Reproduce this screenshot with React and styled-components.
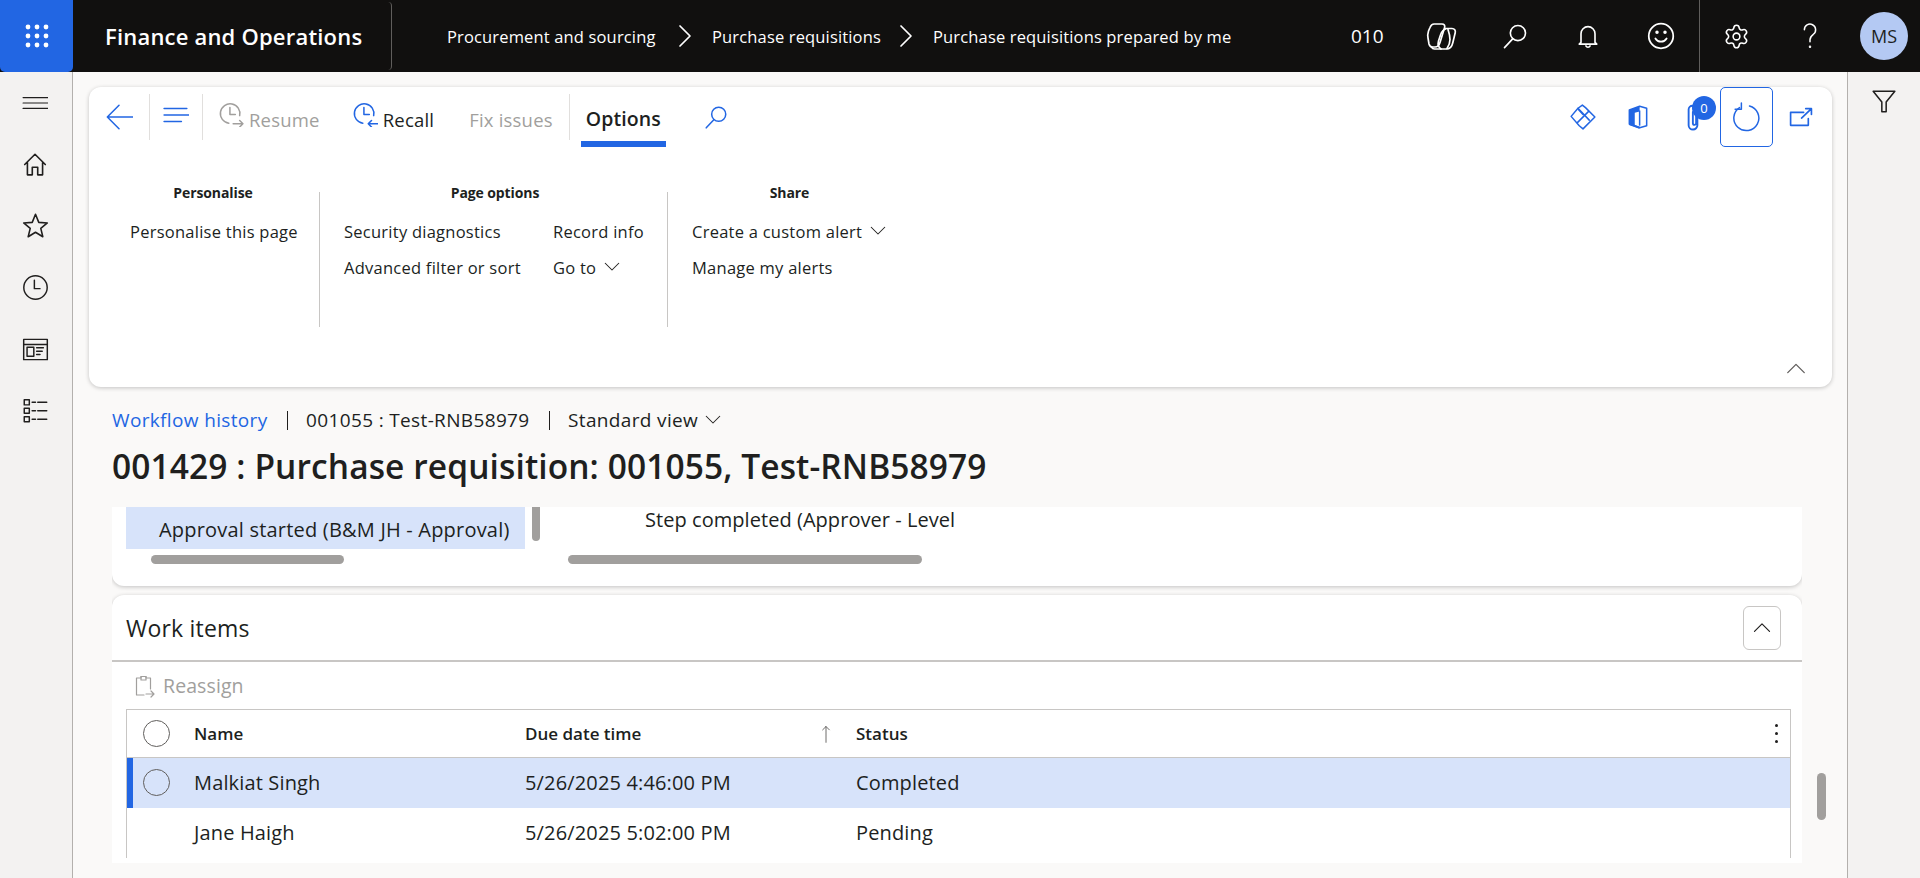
import React from "react";
import styled, { createGlobalStyle } from "styled-components";
import { Settings } from "lucide-react";

const BLUE = "#2266e3";
const INK = "#201f1e";
const MUTED = "#a19f9d";

const GlobalStyle = createGlobalStyle`
  html, body { margin: 0; padding: 0; }
  body {
    font-family: "Open Sans", "Noto Sans", sans-serif;
    color: ${INK};
    background: #faf9f8;
  }
  * { box-sizing: border-box; }
`;

const Icon = ({ size = 24, color = "currentColor", sw = 1.4, children }) => (
  <svg width={size} height={size} viewBox="0 0 24 24" fill="none" stroke={color} strokeWidth={sw} strokeLinecap="round" strokeLinejoin="round">
    {children}
  </svg>
);

const Page = styled.div`
  width: 1920px;
  height: 878px;
  overflow: hidden;
  display: flex;
  flex-direction: column;
`;

/* top bar */
const TopBar = styled.header`
  height: 72px;
  flex: none;
  background: #11100f;
  color: #fff;
  display: flex;
  align-items: center;
`;
const Waffle = styled.div`
  width: 73px;
  height: 72px;
  background: ${BLUE};
  border-radius: 0 0 5px 5px;
  display: grid;
  place-items: center;
`;
const AppTitle = styled.div`
  width: 319px;
  height: 68px;
  padding-left: 32px;
  display: flex;
  align-items: center;
  border-right: 1px solid #605e5c;
  border-radius: 0 4px 4px 0;
  font-size: 22px;
  font-weight: 600;
  letter-spacing: 0.2px;
  white-space: nowrap;
`;
const Crumbs = styled.nav`
  margin-left: 55px;
  display: flex;
  align-items: center;
  font-size: 16.5px;
  letter-spacing: 0.15px;
  white-space: nowrap;
`;
const CrumbLink = styled.span`
  width: ${(p) => p.$w}px;
`;
const CrumbSep = styled.span`
  width: ${(p) => p.$w}px;
  display: flex;
  justify-content: center;
`;
const TopRight = styled.div`
  margin-left: auto;
  display: flex;
  align-items: center;
  height: 100%;
`;
const Company = styled.span`
  width: 54px;
  font-size: 19px;
`;
const TopIcon = styled.div`
  width: 73px;
  height: 72px;
  display: grid;
  place-items: center;
`;
const TopDivider = styled.div`
  width: 1px;
  height: 72px;
  margin-left: 2px;
  background: #605e5c;
`;
const Avatar = styled.div`
  width: 48px;
  height: 48px;
  margin: 0 12px 0 14px;
  border-radius: 50%;
  background: #b4c9f3;
  color: #201f1e;
  display: grid;
  place-items: center;
  font-size: 18px;
`;

/* frame */
const Frame = styled.div`
  flex: 1;
  display: flex;
  min-height: 0;
`;
const LeftRail = styled.aside`
  width: 73px;
  flex: none;
  background: #f3f2f1;
  border-right: 1px solid #b3b0ad;
  display: flex;
  flex-direction: column;
`;
const RailItem = styled.div`
  height: 61.6px;
  display: flex;
  align-items: center;
  justify-content: center;
  padding-right: 2px;
`;
const RightRail = styled.aside`
  width: 73px;
  flex: none;
  background: #f3f2f1;
  border-left: 1px solid #b3b0ad;
  display: flex;
  justify-content: center;
  padding-top: 16px;
`;
const Main = styled.main`
  flex: 1;
  min-width: 0;
  padding: 15px 15px 15px 16px;
  display: flex;
  flex-direction: column;
  position: relative;
`;

/* action pane */
const ActionPane = styled.section`
  height: 300px;
  flex: none;
  background: #fff;
  border-radius: 12px;
  box-shadow: 0 1px 4px rgba(0, 0, 0, 0.22);
  display: flex;
  flex-direction: column;
`;
const Toolbar = styled.div`
  height: 60px;
  flex: none;
  display: flex;
  align-items: flex-start;
`;
const ToolIcon = styled.div`
  width: ${(p) => p.$w}px;
  height: 60px;
  padding-bottom: ${(p) => p.$pb || 0}px;
  flex: none;
  display: grid;
  place-items: center;
  position: relative;
  ${(p) => p.$boxed && `border: 1px solid ${BLUE}; border-radius: 5px;`}
`;
const ToolDivider = styled.div`
  width: 1px;
  height: 46px;
  margin-top: 7px;
  background: #e1dfdd;
  flex: none;
`;
const ToolButton = styled.div`
  height: 60px;
  margin-left: ${(p) => p.$ml}px;
  display: flex;
  align-items: center;
  gap: 5px;
  font-size: 18.5px;
  letter-spacing: 0.2px;
  color: ${(p) => (p.$off ? MUTED : INK)};
  white-space: nowrap;
`;
const ToolLabel = styled.span`
  padding-top: 4px;
`;
const ToolIconWrap = styled.span`
  display: flex;
  margin-top: -6px;
`;
const OptionsTab = styled.div`
  width: 85px;
  height: 60px;
  margin-left: 11px;
  text-align: center;
  line-height: 64px;
  font-size: 19.5px;
  font-weight: 600;
  letter-spacing: 0.1px;
  white-space: nowrap;
  border-bottom: 6px solid ${BLUE};
`;
const ToolRight = styled.div`
  margin-left: auto;
  margin-right: 5px;
  display: flex;
`;
const Badge = styled.span`
  position: absolute;
  left: 27px;
  top: 9px;
  width: 24px;
  height: 24px;
  border-radius: 50%;
  background: ${BLUE};
  color: #fff;
  font-size: 13px;
  line-height: 24px;
  text-align: center;
`;

const Ribbon = styled.div`
  margin-top: 45px;
  display: flex;
`;
const RibbonGroup = styled.div`
  width: ${(p) => p.$w}px;
  height: 135px;
  padding-left: ${(p) => p.$pl}px;
  padding-right: ${(p) => p.$pr || 0}px;
  border-right: ${(p) => (p.$last ? "none" : "1px solid #c8c6c4")};
  flex: none;
`;
const GroupHead = styled.div`
  height: 2px;
  text-align: center;
  font-size: 14px;
  font-weight: 700;
  letter-spacing: -0.1px;
  line-height: 2px;
  width: ${(p) => p.$w}px;
`;
const GroupGrid = styled.div`
  margin-top: 19px;
  display: grid;
  grid-template-columns: ${(p) => p.$cols};
  grid-auto-rows: 36px;
  align-items: center;
  font-size: 16.5px;
  letter-spacing: 0.25px;
  white-space: nowrap;
`;
const RibbonItem = styled.div`
  display: flex;
  align-items: center;
  gap: ${(p) => p.$gap || 0}px;
`;
const PaneFoot = styled.div`
  margin-top: auto;
  padding: 0 25px 7px 0;
  display: flex;
  justify-content: flex-end;
`;

/* page header */
const PageHead = styled.div`
  padding-left: 23px;
  height: 120px;
  flex: none;
  white-space: nowrap;
`;
const ViewLine = styled.div`
  padding-top: 15px;
  display: flex;
  align-items: center;
  height: 50px;
  font-size: 19px;
  letter-spacing: 0.35px;
`;
const ViewLink = styled.span`
  color: ${BLUE};
`;
const Pipe = styled.span`
  width: 1.5px;
  height: 19px;
  background: ${INK};
  margin: 2px 18px 0 19px;
`;
const ViewChevronGap = styled.span`
  width: 6px;
`;
const PageTitle = styled.h1`
  margin: 7px 0 0;
  font-size: 33.5px;
  line-height: 44px;
  font-weight: 600;
  letter-spacing: 0.1px;
`;

/* scrolling content */
const Scroller = styled.div`
  flex: 1;
  min-height: 0;
  overflow: hidden;
  margin-left: 23px;
  margin-right: 30px;
  display: flex;
  flex-direction: column;
  gap: 9px;
`;
const VScrollThumb = styled.div`
  position: absolute;
  left: 1744px;
  top: 701px;
  width: 9px;
  height: 47px;
  border-radius: 5px;
  background: #a19f9d;
`;
const TreeCard = styled.section`
  height: 79px;
  flex: none;
  background: #fff;
  border-radius: 0 0 12px 12px;
  box-shadow: 0 1px 4px rgba(0, 0, 0, 0.22);
  display: flex;
`;
const TreeCol = styled.div`
  width: ${(p) => p.$w}px;
  margin-left: ${(p) => p.$ml}px;
  flex: none;
`;
const TreeRow = styled.div`
  display: flex;
  height: 42px;
`;
const ActiveNode = styled.div`
  width: 399px;
  height: 42px;
  background: #d7e3fa;
  padding: 11px 0 0 33px;
  font-size: 20px;
  line-height: 24px;
  letter-spacing: 0.2px;
  white-space: nowrap;
`;
const TreeVThumb = styled.div`
  width: 8px;
  height: 34px;
  margin-left: 7px;
  border-radius: 0 0 4px 4px;
  background: #a19f9d;
`;
const StepNode = styled.div`
  padding: 0 0 0 77px;
  font-size: 20px;
  letter-spacing: 0.05px;
  white-space: nowrap;
  line-height: 26px;
`;
const HBar = styled.div`
  width: ${(p) => p.$w}px;
  height: 9px;
  margin: 6px 0 0 ${(p) => p.$ml}px;
  border-radius: 5px;
  background: #a19f9d;
`;
const WorkCard = styled.section`
  flex: 1;
  min-height: 320px;
  background: #fff;
  border-radius: 12px 12px 0 0;
  box-shadow: 0 1px 4px rgba(0, 0, 0, 0.22);
`;
const CardHead = styled.div`
  height: 67px;
  display: flex;
  align-items: center;
  justify-content: space-between;
  padding: 0 21px 0 14px;
  border-bottom: 2px solid #c8c6c4;
`;
const CardTitle = styled.h2`
  margin: 0;
  font-size: 23px;
  font-weight: 500;
  letter-spacing: 0.2px;
`;
const CollapseBtn = styled.div`
  width: 38px;
  height: 44px;
  border: 1px solid #c8c6c4;
  border-radius: 6px;
  display: grid;
  place-items: center;
`;
const SubBar = styled.div`
  height: 47px;
  padding-left: 21px;
  display: flex;
  align-items: center;
  gap: 6px;
  font-size: 19.5px;
  letter-spacing: 0.1px;
  color: ${MUTED};
`;
const Grid = styled.div`
  margin: 0 11px 0 14px;
  border: 1px solid #c8c6c4;
  border-bottom: none;
`;
const GridRow = styled.div`
  display: grid;
  grid-template-columns: 67px 331px 331px 1fr;
  align-items: center;
  height: ${(p) => p.$h}px;
  padding-bottom: ${(p) => (p.$head ? 0 : 2)}px;
  background: ${(p) => (p.$selected ? "#d7e3fa" : "#fff")};
  border-bottom: ${(p) => (p.$head ? "1px solid #c8c6c4" : "none")};
  position: relative;
  font-size: ${(p) => (p.$head ? "17px" : "20px")};
  font-weight: ${(p) => (p.$head ? 600 : 400)};
  letter-spacing: ${(p) => (p.$head ? "0" : "0.15px")};
  white-space: nowrap;
`;
const RowAccent = styled.span`
  position: absolute;
  left: 0;
  top: 0;
  bottom: 0;
  width: 6px;
  background: ${BLUE};
`;
const Radio = styled.span`
  width: 27px;
  height: 27px;
  margin-left: 16px;
  border-radius: 50%;
  border: 1px solid #605e5c;
  display: block;
`;
const HeadCell = styled.div`
  display: flex;
  align-items: center;
  justify-content: space-between;
  padding-right: 20px;
`;
const StatusCell = styled.div`
  display: flex;
  align-items: center;
  justify-content: space-between;
  padding-right: 12px;
`;
const DotsBtn = styled.div`
  display: flex;
  flex-direction: column;
  gap: 5px;
`;
const Dot = styled.span`
  width: 3px;
  height: 3px;
  border-radius: 50%;
  background: ${INK};
`;

/* icons */
const WaffleIcon = () => (
  <svg width="24" height="24" viewBox="0 0 24 24" fill="#fff">
    {[3, 12, 21].flatMap((y) =>
      [3, 12, 21].map((x) => <circle key={`${x}-${y}`} cx={x} cy={y} r="2.4" />)
    )}
  </svg>
);
const Chevron = ({ size = 24, dir = "right", color = "#fff" }) => {
  const d = {
    right: "M7 2l10 10-10 10",
    down: "M3 7l9 9 9-9",
    up: "M3 16l9-9 9 9",
  }[dir];
  return (
    <Icon size={size} color={color} sw={dir === "right" ? 1.7 : 1.4}>
      <path d={d} />
    </Icon>
  );
};
const CopilotIcon = () => (
  <svg width="44" height="44" viewBox="0 0 44 44" fill="none" stroke="#fff" strokeWidth="1.7" strokeLinejoin="round" strokeLinecap="round">
    <path d="M14 10h8c2.200 0 3.200 1.500 2.600 3.500L20 28.500c-.8 2.800-2.200 4.500-5 4.500h-2.500c-2.200 0-3-1-3.500-3L8 24c-.5-2.500-.3-4.500.5-7l1.500-3.500C11 11 12 10 14 10z" />
    <path d="M25 14.500h7c2.500 0 3.800 1.800 3.200 4.200l-2.400 10c-.9 4-2.800 6.300-6.300 6.300H14.500c-1.500 0-2.500-1-3-2" />
    <path d="M25.500 15c-2.500.7-4 3-5 6l-2 6c-.8 3-.5 6 2.500 8" />
    <path d="M28 15.500c1.200 3.500 2 7 2 10s-1 6-3 9" />
  </svg>
);
const SearchIcon = ({ size = 28, color = "#fff", sw = 1.4 }) => (
  <Icon size={size} color={color} sw={sw}>
    <circle cx="14.5" cy="9.5" r="6.5" />
    <path d="M10 14.5L3 22" />
  </Icon>
);
const BellIcon = () => (
  <Icon size={28}>
    <path d="M6 17.5V10a6 6 0 0 1 12 0v7.5l1.5 1.5h-15z" />
    <path d="M10.2 20.5a2 2 0 0 0 3.6 0" />
  </Icon>
);
const SmileIcon = () => (
  <Icon size={30}>
    <circle cx="12" cy="12" r="9.8" />
    <path d="M7.5 14a5.2 5.2 0 0 0 9 0" />
    <circle cx="8.8" cy="9" r=".7" fill="#fff" />
    <circle cx="15.2" cy="9" r=".7" fill="#fff" />
  </Icon>
);
const HelpIcon = () => (
  <Icon size={30} sw={1.2}>
    <path d="M7.5 7a4.500 4.500 0 1 1 7.200 3.600c-1.600 1.200-2.700 2-2.700 4.400v1.500" />
    <circle cx="12" cy="20.500" r=".4" fill="#fff" />
  </Icon>
);
const BackIcon = () => (
  <Icon size={28} color={BLUE} sw={1.3}>
    <path d="M25 12H2M12 2L2 12l10 10" />
  </Icon>
);
const LinesIcon = () => (
  <Icon size={26} color={BLUE} sw={1.4}>
    <path d="M1 6h21M1 12h24M1 18h16" />
  </Icon>
);
const ClockArrow = ({ color, back }) => (
  <Icon size={26} color={color} sw={1.4}>
    <path d="M10 20.5a9 9 0 1 1 10-7" />
    <path d="M11 6v6.5h5" />
    {back ? <path d="M24 21h-9m3-3l-3 3 3 3" /> : <path d="M14 21h9m-3-3l3 3-3 3" />}
  </Icon>
);
const DiamondIcon = () => (
  <Icon size={30} color={BLUE} sw={1.2}>
    <path d="M8 5L2.500 11.500 9 19l3 2.500 9.500-9.500L14 4.500 11.500 2.500z" />
    <path d="M8 5l9 9.500M16.500 7.500l-9 9M12 10l-3.500-3.800" />
  </Icon>
);
const OfficeIcon = () => (
  <svg width="26" height="28" viewBox="0 0 24 24" fill="none">
    <path d="M13.500 2L4 5.500v13l9.500 3.500 6.500-2V4z" fill="#fff" stroke={BLUE} strokeWidth="1.4" strokeLinejoin="round" />
    <path d="M13.500 2L4 5.500v13l5 1.500V8l4.500-1z" fill={BLUE} />
    <path d="M13.500 6v14" stroke={BLUE} strokeWidth="1.4" />
    <path d="M4 18.500l9.500 3.500" stroke={BLUE} strokeWidth="2" />
  </svg>
);
const ClipIcon = () => (
  <Icon size={30} color={BLUE} sw={1.5}>
    <path d="M15.500 4v14.500a3.500 3.500 0 0 1-7 0V6a3 3 0 0 1 6 0v11a1.300 1.300 0 0 1-2.600 0V8" />
  </Icon>
);
const RefreshIcon = () => (
  <Icon size={30} color={BLUE} sw={1.2}>
    <path d="M14 3.200A10 10 0 1 1 6 4.500" />
    <path d="M7.500 .8v5h-5" />
  </Icon>
);
const OpenIcon = () => (
  <Icon size={25} color={BLUE} sw={1.6}>
    <path d="M15 7H2.500v12.500h17V13" />
    <path d="M13 12.500L22 4M17 3.500h5.500V9" />
  </Icon>
);
const MenuIcon = () => (
  <Icon size={26} color={INK} sw={1.1}>
    <path d="M1 7h24M1 12h24M1 17h24" />
  </Icon>
);
const HomeIcon = () => (
  <Icon size={26} color={INK} sw={1.5}>
    <path d="M2.500 12.500L12 3l9.500 9.500M5 10.500V22h4.500v-7h5v7H19V10.500" />
  </Icon>
);
const StarIcon = () => (
  <Icon size={27} color={INK} sw={1.4}>
    <path d="M12 2l2.900 7.200 7.600.5-5.800 4.900 1.800 7.400-6.500-4-6.500 4 1.800-7.400L1.500 9.700l7.600-.5z" />
  </Icon>
);
const RecentIcon = () => (
  <Icon size={27} color={INK} sw={1.3}>
    <circle cx="12" cy="12" r="10.400" />
    <path d="M11 5.500V13h5" />
  </Icon>
);
const WorkspaceIcon = () => (
  <Icon size={27} color={INK} sw={1.3}>
    <rect x="1.500" y="3" width="21" height="18" />
    <path d="M1.500 7.500h21" />
    <rect x="4.500" y="10" width="6" height="8" />
    <path d="M13 10.500h6M13 13.500h5M13 16.500h3" />
  </Icon>
);
const ListIcon = () => (
  <Icon size={27} color={INK} sw={1.3}>
    <rect x="2" y="2.500" width="4.500" height="4.500" />
    <rect x="2" y="10" width="4.500" height="4.500" />
    <rect x="2" y="17.500" width="4.500" height="4.500" />
    <path d="M9 4.700h3M14 4.700h8M9 12.200h3M14 12.200h8M9 19.700h3M14 19.700h8" />
  </Icon>
);
const FilterIcon = () => (
  <Icon size={26} color={INK} sw={1.4}>
    <path d="M2 3h20l-8 10v9h-4v-9z" />
  </Icon>
);
const ReassignIcon = () => (
  <Icon size={24} color={MUTED} sw={1.2}>
    <path d="M11 21H3.500V4H8V2.500h5V4h4.500v11" />
    <path d="M8 2.500h5V6H8z" />
    <path d="M13 20h8m-3-3l3 3-3 3" />
  </Icon>
);
const SortIcon = () => (
  <Icon size={20} color="#605e5c" sw={1.1}>
    <path d="M12 22V3M8 7l4-4 4 4" />
  </Icon>
);

const railIcons = [MenuIcon, HomeIcon, StarIcon, RecentIcon, WorkspaceIcon, ListIcon];

export default function App() {
  return (
    <Page>
      <GlobalStyle />
      <TopBar>
        <Waffle>
          <WaffleIcon />
        </Waffle>
        <AppTitle>Finance and Operations</AppTitle>
        <Crumbs>
          <CrumbLink $w={210}>Procurement and sourcing</CrumbLink>
          <CrumbSep $w={55}><Chevron /></CrumbSep>
          <CrumbLink $w={167}>Purchase requisitions</CrumbLink>
          <CrumbSep $w={54}><Chevron /></CrumbSep>
          <CrumbLink $w={299}>Purchase requisitions prepared by me</CrumbLink>
        </Crumbs>
        <TopRight>
          <Company>010</Company>
          <TopIcon><CopilotIcon /></TopIcon>
          <TopIcon><SearchIcon /></TopIcon>
          <TopIcon><BellIcon /></TopIcon>
          <TopIcon><SmileIcon /></TopIcon>
          <TopDivider />
          <TopIcon><Settings size={27} strokeWidth={1.4} color="#fff" /></TopIcon>
          <TopIcon><HelpIcon /></TopIcon>
          <Avatar>MS</Avatar>
        </TopRight>
      </TopBar>
      <Frame>
        <LeftRail>
          {railIcons.map((RailIcon, i) => (
            <RailItem key={i}><RailIcon /></RailItem>
          ))}
        </LeftRail>
        <Main>
          <ActionPane>
            <Toolbar>
              <ToolIcon $w={60}><BackIcon /></ToolIcon>
              <ToolDivider />
              <ToolIcon $w={52} $pb={4}><LinesIcon /></ToolIcon>
              <ToolDivider />
              <ToolButton $ml={15} $off>
                <ToolIconWrap><ClockArrow color={MUTED} /></ToolIconWrap>
                <ToolLabel>Resume</ToolLabel>
              </ToolButton>
              <ToolButton $ml={32}>
                <ToolIconWrap><ClockArrow color={BLUE} back /></ToolIconWrap>
                <ToolLabel>Recall</ToolLabel>
              </ToolButton>
              <ToolButton $ml={35} $off>
                <ToolLabel>Fix issues</ToolLabel>
              </ToolButton>
              <ToolIcon $w={16} />
              <ToolDivider />
              <OptionsTab>Options</OptionsTab>
              <ToolIcon $w={100}><SearchIcon size={26} color={BLUE} /></ToolIcon>
              <ToolRight>
                <ToolIcon $w={55}><DiamondIcon /></ToolIcon>
                <ToolIcon $w={55}><OfficeIcon /></ToolIcon>
                <ToolIcon $w={55}>
                  <ClipIcon />
                  <Badge>0</Badge>
                </ToolIcon>
                <ToolIcon $w={53} $boxed><RefreshIcon /></ToolIcon>
                <ToolIcon $w={54}><OpenIcon /></ToolIcon>
              </ToolRight>
            </Toolbar>
            <Ribbon>
              <RibbonGroup $w={231} $pl={41} $pr={23}>
                <GroupHead $w={166}>Personalise</GroupHead>
                <GroupGrid $cols="1fr">
                  <RibbonItem>Personalise this page</RibbonItem>
                </GroupGrid>
              </RibbonGroup>
              <RibbonGroup $w={348} $pl={24}>
                <GroupHead $w={302}>Page options</GroupHead>
                <GroupGrid $cols="209px 1fr">
                  <RibbonItem>Security diagnostics</RibbonItem>
                  <RibbonItem>Record info</RibbonItem>
                  <RibbonItem>Advanced filter or sort</RibbonItem>
                  <RibbonItem $gap={7}>Go to <Chevron size={18} dir="down" color={INK} /></RibbonItem>
                </GroupGrid>
              </RibbonGroup>
              <RibbonGroup $w={300} $pl={24} $last>
                <GroupHead $w={195}>Share</GroupHead>
                <GroupGrid $cols="1fr">
                  <RibbonItem $gap={7}>Create a custom alert <Chevron size={18} dir="down" color={INK} /></RibbonItem>
                  <RibbonItem>Manage my alerts</RibbonItem>
                </GroupGrid>
              </RibbonGroup>
            </Ribbon>
            <PaneFoot>
              <Chevron size={22} dir="up" color="#605e5c" />
            </PaneFoot>
          </ActionPane>
          <PageHead>
            <ViewLine>
              <ViewLink>Workflow history</ViewLink>
              <Pipe />
              001055 : Test-RNB58979
              <Pipe />
              Standard view
              <ViewChevronGap />
              <Chevron size={18} dir="down" color={INK} />
            </ViewLine>
            <PageTitle>001429 : Purchase requisition: 001055, Test-RNB58979</PageTitle>
          </PageHead>
          <Scroller>
            <TreeCard>
              <TreeCol $w={430} $ml={14}>
                <TreeRow>
                  <ActiveNode>Approval started (B&amp;M JH - Approval)</ActiveNode>
                  <TreeVThumb />
                </TreeRow>
                <HBar $w={193} $ml={25} />
              </TreeCol>
              <TreeCol $w={400} $ml={12}>
                <TreeRow>
                  <StepNode>Step completed (Approver - Level</StepNode>
                </TreeRow>
                <HBar $w={354} $ml={0} />
              </TreeCol>
            </TreeCard>
            <WorkCard>
              <CardHead>
                <CardTitle>Work items</CardTitle>
                <CollapseBtn><Chevron size={20} dir="up" color={INK} /></CollapseBtn>
              </CardHead>
              <SubBar>
                <ReassignIcon />
                Reassign
              </SubBar>
              <Grid>
                <GridRow $h={48} $head>
                  <Radio />
                  <div>Name</div>
                  <HeadCell>Due date time <SortIcon /></HeadCell>
                  <StatusCell>Status
                    <DotsBtn><Dot /><Dot /><Dot /></DotsBtn>
                  </StatusCell>
                </GridRow>
                <GridRow $h={50} $selected>
                  <RowAccent />
                  <Radio />
                  <div>Malkiat Singh</div>
                  <div>5/26/2025 4:46:00 PM</div>
                  <div>Completed</div>
                </GridRow>
                <GridRow $h={50}>
                  <span />
                  <div>Jane Haigh</div>
                  <div>5/26/2025 5:02:00 PM</div>
                  <div>Pending</div>
                </GridRow>
              </Grid>
            </WorkCard>
          </Scroller>
          <VScrollThumb />
        </Main>
        <RightRail>
          <FilterIcon />
        </RightRail>
      </Frame>
    </Page>
  );
}
